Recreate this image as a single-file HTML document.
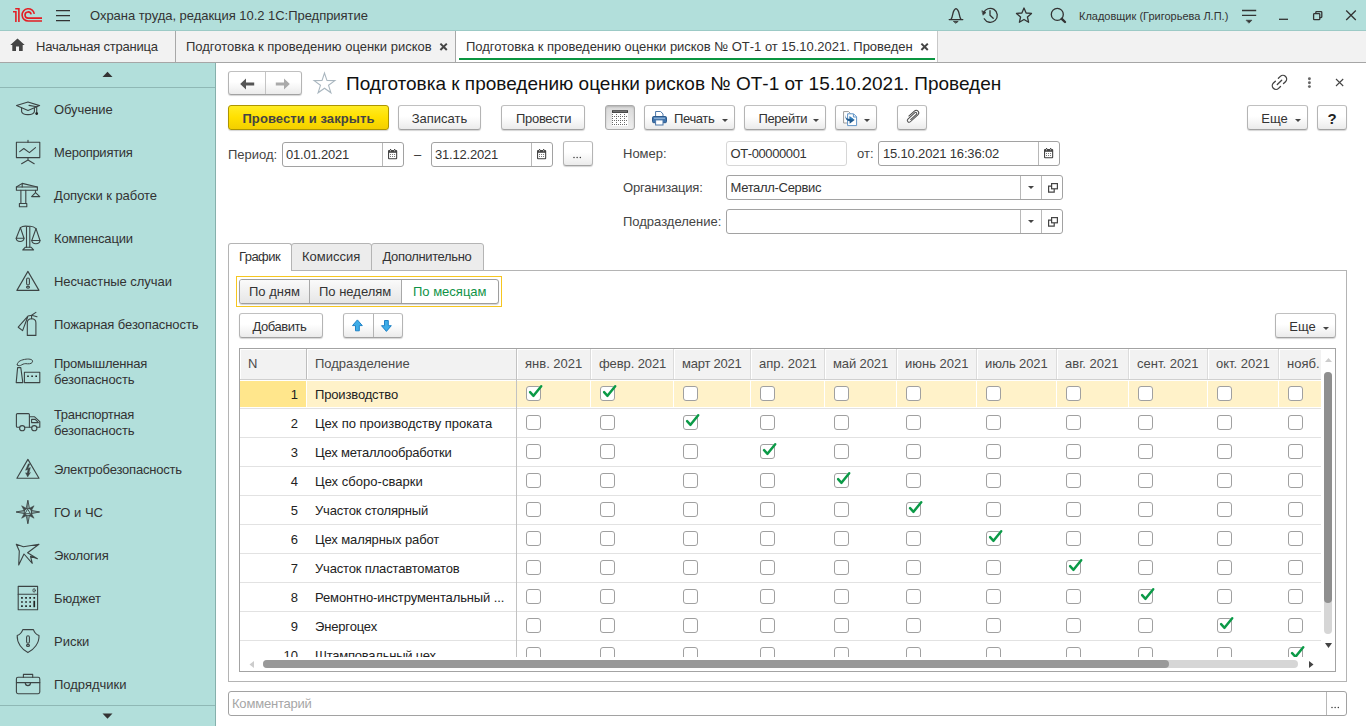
<!DOCTYPE html>
<html><head><meta charset="utf-8">
<style>
*{box-sizing:border-box;margin:0;padding:0}
html,body{width:1366px;height:726px;overflow:hidden;background:#fff;font-family:"Liberation Sans",sans-serif;font-size:13px;color:#333}
div,span,svg{position:absolute}
.t{white-space:nowrap;line-height:16px;height:16px}
#top{left:0;top:0;width:1366px;height:31px;background:#b2dfdb;border-bottom:1px solid #9ccac6}
#tabs{left:0;top:31px;width:1366px;height:32px;background:#f2f2f2;border-bottom:1px solid #a6a6a6}
#side{left:0;top:63px;width:216px;height:663px;background:#b2dfdb;border-right:1px solid #86b0ac}
.btn{border:1px solid #b5b5b5;border-color:#c0c0c0 #b4b4b4 #a2a2a2 #b4b4b4;border-radius:3px;background:linear-gradient(#ffffff 0%,#ffffff 45%,#ebebeb 100%);box-shadow:0 1px 1px rgba(0,0,0,.17);height:25px;color:#333}
.btn .t{top:5px}
.inp{border:1px solid #a2a2a2;border-radius:3px;background:#fff;height:25px}
.inp .t{top:4px;left:3px;letter-spacing:-0.2px}
.vd{width:1px;top:0;bottom:0;background:#b8b8b8}
.si{left:0;width:215px}
.si .t{left:54px;color:#333}
.cb{width:15px;height:15px;border:1px solid #a0a0a0;border-radius:3px;background:#fff}
.hc{top:1px;height:29px;background:#f2f2f2}
.hc .t{left:7px;top:6px;color:#4a4a4a}
.row{left:0;height:29px;width:1082px}
.row .ln{left:0;top:0;height:1px;width:1082px;background:#e2e2e2}
.row .t{top:8px;color:#222}
</style></head><body>

<div id="top">
<svg style="left:0;top:0" width="50" height="30" viewBox="0 0 50 30" fill="none" stroke="#e31e24" stroke-width="1.6"><path d="M13 11.8H15.9V21.9"/><path d="M15.2 8.8H18.9V21.9"/><path d="M34.3 13.8A6.15 6.15 0 1 0 28.25 21H42"/><path d="M31.15 14.4A3.1 3.1 0 1 0 28.1 18.1H42"/></svg>
<svg style="left:56px;top:9px" width="15" height="13" viewBox="0 0 15 13"><path d="M0 1.5H14M0 6.5H14M0 11.5H14" stroke="#333" stroke-width="1.25" fill="none"/></svg>
<span class="t" style="left:90px;top:8px;color:#333;letter-spacing:-0.035px">Охрана труда, редакция 10.2 1С:Предприятие</span>
<svg style="left:940px;top:0" width="426" height="30" viewBox="940 0 426 30" fill="none" stroke="#333" stroke-width="1.3" stroke-linecap="round" stroke-linejoin="round"><path d="M949.2 19.6H962.8M951 19.4C953.5 16 952 10 956 8.6C960 10 958.5 16 961 19.4"/><path d="M953.8 21.4H958.2L956 23Z" fill="#333" stroke-width="0.8"/><path d="M984.2 18.8A7 7 0 1 0 983.6 13.2"/><path d="M982.2 10.8L986 12.6L983.2 15Z" fill="#333" stroke-width="0.6"/><path d="M990 10.6V15.2L993.2 18.2"/><path d="M1024.00 8.00L1026.12 12.99L1031.51 13.46L1027.42 17.01L1028.64 22.29L1024.00 19.50L1019.36 22.29L1020.58 17.01L1016.49 13.46L1021.88 12.99Z" /><circle cx="1057.3" cy="14.4" r="6"/><path d="M1061.8 18.8L1065 22" stroke-width="2.4"/><path d="M1242 10.5H1256.2M1242 15.3H1256.2" stroke-linecap="butt"/><path d="M1246.4 20.2H1251.9L1249.15 23Z" fill="#333" stroke-width="0.6"/><path d="M1279 19.3H1288" stroke-linecap="butt"/><rect x="1313.6" y="13.7" width="6.2" height="6" rx="0.8"/><path d="M1315.8 13.4V12.4A0.8 0.8 0 0 1 1316.6 11.6H1321A0.8 0.8 0 0 1 1321.8 12.4V16.8A0.8 0.8 0 0 1 1321 17.6H1320"/><path d="M1346.2 10.5L1355.8 20M1355.8 10.5L1346.2 20" stroke-linecap="butt"/></svg>
<span class="t" style="left:1079px;top:8px;font-size:11px;color:#333">Кладовщик (Григорьева Л.П.)</span>
</div>
<div id="tabs">
<svg style="left:10px;top:7px" width="15" height="14" viewBox="0 0 15 14"><path d="M7.5 0.5L0.3 7H2.3V13H6V8.6H9V13H12.7V7H14.7Z" fill="#444"/></svg>
<span class="t" style="left:36px;top:8px;letter-spacing:-0.22px">Начальная страница</span>
<div style="left:175px;top:0;width:1px;height:31px;background:#a8a8a8"></div>
<span class="t" style="left:186px;top:8px">Подготовка к проведению оценки рисков</span>
<svg style="left:439.2px;top:11px" width="10" height="10" viewBox="0 0 10 10"><path d="M1.4 1.6L7.8 8M7.8 1.6L1.4 8" stroke="#444" stroke-width="2"/></svg>
<div style="left:455px;top:0;width:1px;height:31px;background:#a8a8a8"></div>
<div style="left:456px;top:0;width:481px;height:31px;background:#fff"></div>
<div style="left:937px;top:0;width:1px;height:31px;background:#c8c8c8"></div>
<div style="left:459px;top:27px;width:476px;height:2px;background:#0a9540"></div>
<span class="t" style="left:466px;top:8px;letter-spacing:-0.025px">Подготовка к проведению оценки рисков № ОТ-1 от 15.10.2021. Проведен</span>
<svg style="left:920px;top:11px" width="10" height="10" viewBox="0 0 10 10"><path d="M1.4 1.6L7.8 8M7.8 1.6L1.4 8" stroke="#444" stroke-width="2"/></svg>
</div>
<div id="side">
<svg style="left:102px;top:8px" width="11" height="7" viewBox="0 0 11 7"><path d="M0.5 6L5.5 0.8L10.5 6Z" fill="#333"/></svg>
<div style="left:0;top:24px;width:215px;height:1px;background:#8fb8b5"></div>
<div class="si" style="top:25px;height:43px">
<span class="t" style="top:14px;letter-spacing:-0.1px">Обучение</span>
</div>
<div class="si" style="top:68px;height:43px">
<span class="t" style="top:14px;letter-spacing:-0.26px">Мероприятия</span>
</div>
<div class="si" style="top:111px;height:43px">
<span class="t" style="top:14px;letter-spacing:-0.05px">Допуски к работе</span>
</div>
<div class="si" style="top:154px;height:43px">
<span class="t" style="top:14px;letter-spacing:-0.19px">Компенсации</span>
</div>
<div class="si" style="top:197px;height:43px">
<span class="t" style="top:14px;letter-spacing:-0.04px">Несчастные случаи</span>
</div>
<div class="si" style="top:240px;height:43px">
<span class="t" style="top:14px;letter-spacing:-0.09px">Пожарная безопасность</span>
</div>
<div class="si" style="top:283px;height:51px">
<span class="t" style="top:10px;letter-spacing:-0.25px">Промышленная</span>
<span class="t" style="top:26px;letter-spacing:-0.1px">безопасность</span>
</div>
<div class="si" style="top:334px;height:51px">
<span class="t" style="top:10px;letter-spacing:-0.34px">Транспортная</span>
<span class="t" style="top:26px;letter-spacing:-0.1px">безопасность</span>
</div>
<div class="si" style="top:385px;height:43px">
<span class="t" style="top:14px;letter-spacing:-0.2px">Электробезопасность</span>
</div>
<div class="si" style="top:428px;height:43px">
<span class="t" style="top:14px;letter-spacing:0px">ГО и ЧС</span>
</div>
<div class="si" style="top:471px;height:43px">
<span class="t" style="top:14px;letter-spacing:-0.2px">Экология</span>
</div>
<div class="si" style="top:514px;height:43px">
<span class="t" style="top:14px;letter-spacing:0px">Бюджет</span>
</div>
<div class="si" style="top:557px;height:43px">
<span class="t" style="top:14px;letter-spacing:0px">Риски</span>
</div>
<div class="si" style="top:600px;height:43px">
<span class="t" style="top:14px;letter-spacing:0px">Подрядчики</span>
</div>
<svg style="left:0;top:0" width="215" height="663" viewBox="0 63 215 663" fill="none" stroke="#3c4444" stroke-width="1.1" stroke-linejoin="round" stroke-linecap="round"><path d="M16.5 105.6L28 102L39.6 105.6L28 110.4Z"/><path d="M21.6 108V111.6C22.5 115.6 33.5 115.6 34.4 111.6V108"/><path d="M29 105.4L36.7 106.8V112.5"/><circle cx="36.7" cy="113.6" r="0.9" fill="#222" stroke="#222"/><rect x="16.4" y="142.3" width="23.4" height="15.3"/><path d="M28 140.4V142.3M28 157.6V160L21.6 163.7M28 160L34.2 163.7"/><path d="M19.7 151.6L23.8 148.5L29.4 152.6L35.5 147.6"/><rect x="16.4" y="187" width="21" height="3.2"/><path d="M16.4 187L22.2 183.4L37.4 187M22.2 183.4V187"/><path d="M20.9 190.2V203.5M25.8 190.2V203.5"/><rect x="19.4" y="203.5" width="7.4" height="3.3"/><path d="M35.5 190.2V192.6L31.6 196.6H39.8L35.5 192.6"/><path d="M26.5 227V247.2M29.8 227V247.2"/><path d="M25.4 247.2H31L33.6 249.9H22.8Z"/><path d="M20.4 227.6C23 225.6 26 226 28.2 226.4C31 226 34 226.6 36 228.6"/><path d="M16.2 238.3L20.4 227.6L24 238.3Z"/><path d="M16.2 238.3C16.6 242.6 23.6 242.6 24 238.3"/><path d="M31.8 240.5L36 228.6L40 240.5Z"/><path d="M31.8 240.5C32.2 244.8 39.6 244.8 40 240.5"/><path d="M27.9 271.4L39 290.4H16.9Z"/><rect x="26.6" y="278" width="2.8" height="7" rx="1.4"/><ellipse cx="28" cy="287.2" rx="1.5" ry="0.9"/><path d="M27.3 335.4V322.8C27.3 317.4 35.9 317.4 35.9 322.8V335.4Z"/><path d="M31.6 318.7V315.2M31.6 315.2L35.9 312.4M31.6 315.2L37 316.8"/><path d="M31.6 315.6C29.6 315.2 27.6 315.8 26.6 317.6L18.2 327.2L22.6 330.6L27.6 317.2"/><path d="M17.6 367.6H20.8L22.8 382.6H16.2Z"/><rect x="24.4" y="372.3" width="15.4" height="10.3"/><path d="M27.2 376.2H28.8M31.3 376.2H32.9M35.4 376.2H37" stroke="#222" stroke-width="1.6" stroke-linecap="butt"/><path d="M17.4 365C16.6 362.4 20 360.2 24.6 359.4C28.6 358.6 32.6 359.2 32.6 361.2C32.6 363.2 30.2 364 27.6 363.8C25.2 363.4 23.4 363.8 21.8 364.8C20.2 365.8 18 366.4 17.4 365Z" stroke-width="1"/><path d="M19.6 427.2H17.4A1 1 0 0 1 16.4 426.2V414.6A1 1 0 0 1 17.4 413.6H28.4A1 1 0 0 1 29.4 414.6V427.2H24.8"/><path d="M29.4 416.8H34.6L39.8 421.6V427.2H37"/><path d="M31.6 427.2H29.4"/><path d="M31.6 419.4H35.2L38.4 422.6H31.6Z"/><circle cx="22.2" cy="428.2" r="2.6"/><circle cx="34.3" cy="428.2" r="2.6"/><path d="M27.9 459.4L39 478.3H16.9Z"/><path d="M28.2 464L25.5 470.3L28.1 469.5L27 473.2L25.5 472.8L27.7 477L30.5 472.4L28.9 473.2L30.4 467.5L27.9 468.5L29.8 464Z" fill="#3c4444" stroke-width="0.4"/><g transform="rotate(0 27.85 512.00)"><path d="M26.15 508.60L27.85 500.30L29.55 508.60" stroke-width="0.85"/><path d="M27.85 500.80V508.20" stroke-width="0.8"/></g><g transform="rotate(45 27.85 512.00)"><path d="M26.35 508.20L27.85 503.20L29.35 508.20Z" fill="#3c4444" stroke-width="0.5"/></g><g transform="rotate(90 27.85 512.00)"><path d="M26.15 508.60L27.85 500.30L29.55 508.60" stroke-width="0.85"/><path d="M27.85 500.80V508.20" stroke-width="0.8"/></g><g transform="rotate(135 27.85 512.00)"><path d="M26.35 508.20L27.85 503.20L29.35 508.20Z" fill="#3c4444" stroke-width="0.5"/></g><g transform="rotate(180 27.85 512.00)"><path d="M26.15 508.60L27.85 500.30L29.55 508.60" stroke-width="0.85"/><path d="M27.85 500.80V508.20" stroke-width="0.8"/></g><g transform="rotate(225 27.85 512.00)"><path d="M26.35 508.20L27.85 503.20L29.35 508.20Z" fill="#3c4444" stroke-width="0.5"/></g><g transform="rotate(270 27.85 512.00)"><path d="M26.15 508.60L27.85 500.30L29.55 508.60" stroke-width="0.85"/><path d="M27.85 500.80V508.20" stroke-width="0.8"/></g><g transform="rotate(315 27.85 512.00)"><path d="M26.35 508.20L27.85 503.20L29.35 508.20Z" fill="#3c4444" stroke-width="0.5"/></g><circle cx="27.85" cy="512.00" r="3.7" stroke-width="0.9"/><path d="M27.85 509.40L30.35 513.70H25.35Z" stroke-width="0.9"/><path d="M16.3 544.3L23.4 546.8L39 544.3L27.6 552.8L37.4 558.7L30.5 556.3L32.3 563.3L24 554L18.7 565L19.3 551Z"/><rect x="18.2" y="586.4" width="19.4" height="23.3"/><path d="M18.2 594.3H37.6"/><ellipse cx="34.1" cy="590.4" rx="1.2" ry="1.7" stroke-width="0.9"/><path d="M21.1 597.8h1.7M25.2 597.8h1.7M29.3 597.8h1.7M21.1 602.0h1.7M25.2 602.0h1.7M29.3 602.0h1.7M21.1 606.2h1.7M25.2 606.2h1.7M29.3 606.2h1.7M33.4 597.8h1.7" stroke="#222" stroke-width="1.7" stroke-linecap="butt"/><path d="M34.25 600.8V607.2" stroke="#222" stroke-width="1.7" stroke-linecap="butt"/><path d="M22.8 629.6H33.4C34.4 632.6 36.6 634.6 39 635.6C39.4 643 34 649.6 27.9 652.6C22 649.6 16.8 643 17.2 635.6C19.6 634.6 21.8 632.6 22.8 629.6Z"/><rect x="26.6" y="635.8" width="2.8" height="7.4" rx="1.4"/><ellipse cx="28" cy="645.4" rx="1.5" ry="1"/><rect x="16.4" y="677.3" width="23.4" height="16.4" rx="1.6"/><path d="M23.4 677.3V674.4H32.7V677.3"/><path d="M16.4 682.6H39.8"/><path d="M25.2 682.6C25.4 686.6 30.4 686.6 30.6 682.6"/></svg>
<div style="left:0;top:642px;width:215px;height:1px;background:#8fb8b5"></div>
<svg style="left:102px;top:650px" width="11" height="7" viewBox="0 0 11 7"><path d="M0.5 0.5L5.5 5.8L10.5 0.5Z" fill="#333"/></svg>
</div>
<div id="main" style="left:0;top:0;width:1366px;height:726px">
<div class="btn" style="left:228px;top:71px;width:74px;height:24px"><div class="vd" style="left:36px;background:#c4c4c4"></div><svg style="left:10.6px;top:5.5px" width="15" height="12" viewBox="0 0 15 12"><path d="M0.2 6L6 0.6V4.4H14.2V7.6H6V11.4Z" fill="#555"/></svg><svg style="left:46.2px;top:5.5px" width="15" height="12" viewBox="0 0 15 12"><path d="M14.8 6L9 0.6V4.4H0.8V7.6H9V11.4Z" fill="#aaa"/></svg></div>
<svg style="left:310px;top:70px" width="30" height="26" viewBox="310 70 30 26" fill="none" stroke="#a9b6bf" stroke-width="1.1" stroke-linejoin="miter"><path d="M324.50 73.10L327.00 80.56L334.87 80.63L328.54 85.31L330.91 92.82L324.50 88.25L318.09 92.82L320.46 85.31L314.13 80.63L322.00 80.56Z" /></svg>
<span class="t" style="left:346px;top:73px;font-size:19px;line-height:22px;height:22px;color:#111">Подготовка к проведению оценки рисков № ОТ-1 от 15.10.2021. Проведен</span>
<svg style="left:1268px;top:70px" width="24" height="24" viewBox="1268 70 24 24" fill="none" stroke="#444" stroke-width="1.35" stroke-linecap="round"><g transform="translate(1276 85.7) rotate(-44)"><path d="M2.7 -3.7H0A3.7 3.7 0 0 0 0 3.7H2.7M6.9 -3.7H9.6A3.7 3.7 0 0 1 9.6 3.7H6.9M1.8 0H7.9"/></g></svg>
<svg style="left:1306px;top:76px" width="7" height="14" viewBox="0 0 7 14"><circle cx="3.4" cy="2.7" r="1.45" fill="#666"/><circle cx="3.4" cy="6.7" r="1.45" fill="#666"/><circle cx="3.4" cy="10.6" r="1.45" fill="#666"/></svg>
<svg style="left:1334px;top:77px" width="11" height="11" viewBox="0 0 11 11"><path d="M2 2L9.2 9M9.2 2L2 9" stroke="#444" stroke-width="1.1"/></svg>
<div class="btn" style="left:228px;top:105px;width:161px;background:linear-gradient(#ffec25 0%,#ffe000 50%,#f3cf00 100%);border-color:#ad9500"><span class="t" style="left:0;width:159px;text-align:center;font-weight:bold;color:#444;letter-spacing:0.1px">Провести и закрыть</span></div>
<div class="btn" style="left:398px;top:105px;width:83px"><span class="t" style="left:0;width:81px;text-align:center">Записать</span></div>
<div class="btn" style="left:501px;top:105px;width:84px"><span class="t" style="left:14px;letter-spacing:-0.3px">Провести</span></div>
<div class="btn" style="left:605px;top:105px;width:30px;background:linear-gradient(#d9d9d9,#efefef);border-color:#aaa;box-shadow:inset 0 1px 2px rgba(0,0,0,.18)"><svg style="left:6px;top:4px" width="16" height="16" viewBox="0 0 16 16"><rect x="0" y="3" width="16" height="13" fill="#fff"/><rect x="0" y="0.2" width="16" height="2.7" fill="#3a3a3a"/><path d="M1 1.55H15" stroke="#999" stroke-width="0.6"/><path d="M0 4.5H16" stroke="#6a6a6a" stroke-width="1" stroke-dasharray="1 3"/><path d="M0 6.5H16" stroke="#6a6a6a" stroke-width="1" stroke-dasharray="1 1"/><path d="M0 8.5H16" stroke="#6a6a6a" stroke-width="1" stroke-dasharray="1 3"/><path d="M0 10.5H16" stroke="#6a6a6a" stroke-width="1" stroke-dasharray="1 1"/><path d="M0 12.5H16" stroke="#6a6a6a" stroke-width="1" stroke-dasharray="1 3"/><path d="M0 14.5H16" stroke="#6a6a6a" stroke-width="1" stroke-dasharray="1 1"/></svg></div>
<div class="btn" style="left:644px;top:105px;width:91px"><svg style="left:7px;top:5px" width="15" height="15" viewBox="0 0 15 15"><path d="M3.6 0.5H8.6L11 2.9V6H3.6Z" fill="#fff" stroke="#4a76a8" stroke-width="1"/><rect x="0.5" y="5.5" width="14" height="6.2" rx="1.2" fill="#3f74ad" stroke="#2d5a8c"/><path d="M2 7.2H13" stroke="#a9c6e4" stroke-width="1"/><rect x="3.6" y="8.9" width="7.4" height="5.1" fill="#fff" stroke="#4a76a8"/></svg><span class="t" style="left:29px;letter-spacing:-0.38px">Печать</span><svg style="left:77px;top:12.5px" width="6" height="3" viewBox="0 0 6 3"><path d="M0 0H6L3 3Z" fill="#444"/></svg></div>
<div class="btn" style="left:744px;top:105px;width:82px"><span class="t" style="left:13.5px;letter-spacing:-0.4px">Перейти</span><svg style="left:68px;top:12.5px" width="6" height="3" viewBox="0 0 6 3"><path d="M0 0H6L3 3Z" fill="#444"/></svg></div>
<div class="btn" style="left:835px;top:105px;width:42px"><svg style="left:7px;top:5px" width="16" height="16" viewBox="0 0 16 16"><path d="M0.6 0.6H5.6L7.6 2.6V12H0.6Z" fill="#fff" stroke="#9a9a9a"/><path d="M4.6 2.8H10.6L13.6 5.8V14.6H4.6Z" fill="#fff" stroke="#5f93c6"/><path d="M10.4 3V6H13.4" fill="none" stroke="#5f93c6"/><path d="M2.2 3.6C2.4 7.4 4.6 8 6.6 8V5.2L11.6 9L6.6 12.8V10.2C3.8 10 2 8 2.2 3.6Z" fill="#215a8e"/><path d="M6.6 8V5.2L11.6 9Z" fill="#2f7fbf"/></svg><svg style="left:28px;top:12.5px" width="6" height="3" viewBox="0 0 6 3"><path d="M0 0H6L3 3Z" fill="#444"/></svg></div>
<div class="btn" style="left:897px;top:105px;width:30px"><svg style="left:0;top:0" width="28" height="23" viewBox="898 106 28 23" fill="none" stroke="#4a4a4a" stroke-width="1" stroke-linecap="round"><g transform="translate(906.6 121.8) rotate(-42.5)"><path d="M4.5 1.1H12.3A1.1 1.1 0 0 0 12.3 -1.1H2.8A1.8 1.8 0 0 0 2.8 2.5H13A2.6 2.6 0 0 0 13 -2.7H5.5"/></g></svg></div>
<div class="btn" style="left:1247px;top:105px;width:61px"><span class="t" style="left:13.3px">Еще</span><svg style="left:47px;top:12.5px" width="6" height="3" viewBox="0 0 6 3"><path d="M0 0H6L3 3Z" fill="#444"/></svg></div>
<div class="btn" style="left:1317px;top:105px;width:30px"><span class="t" style="left:0;width:28px;text-align:center;font-weight:bold;font-size:15px;color:#222">?</span></div>
<span class="t" style="left:228px;top:147px;color:#444">Период:</span>
<div class="inp" style="left:282px;top:142px;width:122px"><span class="t">01.01.2021</span><div class="vd" style="left:99px"></div><svg style="left:105px;top:6px" width="10" height="11" viewBox="0 0 10 11"><rect x="0" y="1" width="9.2" height="9.3" rx="1" fill="#454545"/><rect x="1.1" y="3.8" width="7" height="5.4" fill="#fff"/><path d="M2.55 0V1.4M6.65 0V1.4" stroke="#454545" stroke-width="1.2"/><circle cx="2.55" cy="1.7" r="0.55" fill="#fff"/><circle cx="6.65" cy="1.7" r="0.55" fill="#fff"/><circle cx="2.55" cy="5.6" r="0.5" fill="#454545"/><circle cx="2.55" cy="7.6" r="0.5" fill="#454545"/><circle cx="4.6" cy="5.6" r="0.5" fill="#454545"/><circle cx="4.6" cy="7.6" r="0.5" fill="#454545"/><circle cx="6.65" cy="5.6" r="0.5" fill="#454545"/><circle cx="6.65" cy="7.6" r="0.5" fill="#454545"/></svg></div>
<span class="t" style="left:414px;top:147px">–</span>
<div class="inp" style="left:431px;top:142px;width:122px"><span class="t">31.12.2021</span><div class="vd" style="left:99px"></div><svg style="left:105px;top:6px" width="10" height="11" viewBox="0 0 10 11"><rect x="0" y="1" width="9.2" height="9.3" rx="1" fill="#454545"/><rect x="1.1" y="3.8" width="7" height="5.4" fill="#fff"/><path d="M2.55 0V1.4M6.65 0V1.4" stroke="#454545" stroke-width="1.2"/><circle cx="2.55" cy="1.7" r="0.55" fill="#fff"/><circle cx="6.65" cy="1.7" r="0.55" fill="#fff"/><circle cx="2.55" cy="5.6" r="0.5" fill="#454545"/><circle cx="2.55" cy="7.6" r="0.5" fill="#454545"/><circle cx="4.6" cy="5.6" r="0.5" fill="#454545"/><circle cx="4.6" cy="7.6" r="0.5" fill="#454545"/><circle cx="6.65" cy="5.6" r="0.5" fill="#454545"/><circle cx="6.65" cy="7.6" r="0.5" fill="#454545"/></svg></div>
<div class="btn" style="left:563px;top:141px;width:30px"><svg style="left:9.3px;top:14px" width="9" height="3" viewBox="0 0 9 3"><circle cx="1" cy="1.4" r="0.75" fill="#3a3a3a"/><circle cx="4.15" cy="1.4" r="0.75" fill="#3a3a3a"/><circle cx="7.3" cy="1.4" r="0.75" fill="#3a3a3a"/></svg></div>
<span class="t" style="left:623px;top:146px;color:#444">Номер:</span>
<div class="inp" style="left:726px;top:141px;width:121px;border-color:#d6d6d6"><span class="t" style="letter-spacing:-0.4px;left:3.5px">ОТ-00000001</span></div>
<span class="t" style="left:857px;top:146px;color:#444">от:</span>
<div class="inp" style="left:878px;top:141px;width:182px"><span class="t" style="left:4px;letter-spacing:-0.17px">15.10.2021 16:36:02</span><div class="vd" style="left:159px"></div><svg style="left:165px;top:6px" width="10" height="11" viewBox="0 0 10 11"><rect x="0" y="1" width="9.2" height="9.3" rx="1" fill="#454545"/><rect x="1.1" y="3.8" width="7" height="5.4" fill="#fff"/><path d="M2.55 0V1.4M6.65 0V1.4" stroke="#454545" stroke-width="1.2"/><circle cx="2.55" cy="1.7" r="0.55" fill="#fff"/><circle cx="6.65" cy="1.7" r="0.55" fill="#fff"/><circle cx="2.55" cy="5.6" r="0.5" fill="#454545"/><circle cx="2.55" cy="7.6" r="0.5" fill="#454545"/><circle cx="4.6" cy="5.6" r="0.5" fill="#454545"/><circle cx="4.6" cy="7.6" r="0.5" fill="#454545"/><circle cx="6.65" cy="5.6" r="0.5" fill="#454545"/><circle cx="6.65" cy="7.6" r="0.5" fill="#454545"/></svg></div>
<span class="t" style="left:623px;top:180px;color:#444;letter-spacing:-0.2px">Организация:</span>
<div class="inp" style="left:726px;top:175px;width:337px"><span class="t" style="left:3.5px;letter-spacing:-0.32px">Металл-Сервис</span><div class="vd" style="left:293px"></div><div class="vd" style="left:314px"></div><svg style="left:301px;top:10px" width="6" height="3" viewBox="0 0 6 3"><path d="M0 0H6L3 3Z" fill="#444"/></svg><svg style="left:321px;top:7px" width="10" height="10" viewBox="0 0 10 10" fill="none" stroke="#444" stroke-width="1.2"><rect x="3.6" y="0.6" width="5.8" height="5.2"/><path d="M3.4 3.2H0.6V9.2H6.2V6"/></svg></div>
<span class="t" style="left:623px;top:214px;color:#444">Подразделение:</span>
<div class="inp" style="left:726px;top:209px;width:337px"><div class="vd" style="left:293px"></div><div class="vd" style="left:314px"></div><svg style="left:301px;top:10px" width="6" height="3" viewBox="0 0 6 3"><path d="M0 0H6L3 3Z" fill="#444"/></svg><svg style="left:321px;top:7px" width="10" height="10" viewBox="0 0 10 10" fill="none" stroke="#444" stroke-width="1.2"><rect x="3.6" y="0.6" width="5.8" height="5.2"/><path d="M3.4 3.2H0.6V9.2H6.2V6"/></svg></div>
<div style="left:228px;top:270px;width:1119px;height:412px;border:1px solid #b4b4b4;background:#fff"></div>
<div style="left:291px;top:243px;width:81px;height:28px;background:#ececec;border:1px solid #b4b4b4;border-radius:3px 3px 0 0"><span class="t" style="left:10px;top:5px">Комиссия</span></div>
<div style="left:371px;top:243px;width:113px;height:28px;background:#ececec;border:1px solid #b4b4b4;border-radius:3px 3px 0 0"><span class="t" style="left:10.5px;top:5px;letter-spacing:-0.36px">Дополнительно</span></div>
<div style="left:228px;top:243px;width:64px;height:28px;background:#fff;border:1px solid #b4b4b4;border-bottom:none;border-radius:3px 3px 0 0"><span class="t" style="left:10px;top:5px;letter-spacing:-0.55px">График</span></div>
<div style="left:236px;top:276px;width:266px;height:31px;border:1px solid #f6c620"></div>
<div class="btn" style="left:239px;top:279px;width:260px;background:#fff;border-color:#9e9e9e"><div style="left:0;top:0;width:161px;height:23px;background:linear-gradient(#fafafa,#e6e6e6);border-radius:2px 0 0 2px"></div><div class="vd" style="left:69px;background:#a8a8a8"></div><div class="vd" style="left:161px;background:#a8a8a8"></div><span class="t" style="left:9px;top:4px">По дням</span><span class="t" style="left:79px;top:4px">По неделям</span><span class="t" style="left:173px;top:4px;color:#0f9347">По месяцам</span></div>
<div class="btn" style="left:239px;top:313px;width:84px"><span class="t" style="left:12.5px;letter-spacing:-0.46px">Добавить</span></div>
<div class="btn" style="left:343px;top:313px;width:60px"><div class="vd" style="left:29px;background:#b4b4b4"></div><svg style="left:7px;top:5px" width="14" height="14" viewBox="0 0 14 14"><path d="M6.4 0.9L11.3 6.6H8.3V11.8H4.5V6.6H1.5Z" fill="#3dade8" stroke="#1f82c6" stroke-width="1" stroke-linejoin="round"/></svg><svg style="left:36px;top:5px" width="14" height="14" viewBox="0 0 14 14"><path d="M6.4 12.4L11.3 6.7H8.3V1.5H4.5V6.7H1.5Z" fill="#3dade8" stroke="#1f82c6" stroke-width="1" stroke-linejoin="round"/></svg></div>
<div class="btn" style="left:1275px;top:313px;width:61px"><span class="t" style="left:13.3px">Еще</span><svg style="left:47px;top:12.5px" width="6" height="3" viewBox="0 0 6 3"><path d="M0 0H6L3 3Z" fill="#444"/></svg></div>
<div style="left:239px;top:348px;width:1097px;height:324px;border:1px solid #a3a3a3;background:#fff;overflow:hidden">
<div style="left:0;top:0;width:1081px;height:308px;overflow:hidden">
<div class="hc" style="left:1px;width:65px"><span class="t" style="left:7px;letter-spacing:0px">N</span></div>
<div class="hc" style="left:68px;width:208px"><span class="t" style="left:7px;letter-spacing:0px">Подразделение</span></div>
<div style="left:66px;top:0;width:1px;height:31px;background:#bdbdbd"></div>
<div class="hc" style="left:278px;width:72px"><span class="t" style="left:7px;letter-spacing:0px">янв. 2021</span></div>
<div style="left:276px;top:0;width:1px;height:31px;background:#bdbdbd"></div>
<div class="hc" style="left:352px;width:81px"><span class="t" style="left:7px;letter-spacing:-0.1px">февр. 2021</span></div>
<div style="left:350px;top:0;width:1px;height:31px;background:#dcdcdc"></div>
<div class="hc" style="left:435px;width:75px"><span class="t" style="left:7px;letter-spacing:-0.22px">март 2021</span></div>
<div style="left:433px;top:0;width:1px;height:31px;background:#dcdcdc"></div>
<div class="hc" style="left:512px;width:72px"><span class="t" style="left:7px;letter-spacing:0px">апр. 2021</span></div>
<div style="left:510px;top:0;width:1px;height:31px;background:#dcdcdc"></div>
<div class="hc" style="left:586px;width:70px"><span class="t" style="left:7px;letter-spacing:-0.12px">май 2021</span></div>
<div style="left:584px;top:0;width:1px;height:31px;background:#dcdcdc"></div>
<div class="hc" style="left:658px;width:78px"><span class="t" style="left:7px;letter-spacing:0px">июнь 2021</span></div>
<div style="left:656px;top:0;width:1px;height:31px;background:#dcdcdc"></div>
<div class="hc" style="left:738px;width:78px"><span class="t" style="left:7px;letter-spacing:-0.12px">июль 2021</span></div>
<div style="left:736px;top:0;width:1px;height:31px;background:#dcdcdc"></div>
<div class="hc" style="left:818px;width:70px"><span class="t" style="left:7px;letter-spacing:0px">авг. 2021</span></div>
<div style="left:816px;top:0;width:1px;height:31px;background:#dcdcdc"></div>
<div class="hc" style="left:890px;width:77px"><span class="t" style="left:7px;letter-spacing:0px">сент. 2021</span></div>
<div style="left:888px;top:0;width:1px;height:31px;background:#dcdcdc"></div>
<div class="hc" style="left:969px;width:69px"><span class="t" style="left:7px;letter-spacing:0px">окт. 2021</span></div>
<div style="left:967px;top:0;width:1px;height:31px;background:#dcdcdc"></div>
<div class="hc" style="left:1040px;width:42px"><span class="t" style="left:7px;letter-spacing:0px">нояб.</span></div>
<div style="left:1038px;top:0;width:1px;height:31px;background:#dcdcdc"></div>
<div style="left:0;top:30px;width:1082px;height:1px;background:#cfcfcf"></div>
<div class="row" style="top:30px">
<div style="left:0;top:2px;width:66px;height:26px;background:#ffe68c"></div>
<div style="left:67px;top:2px;width:209px;height:26px;background:#fff2c9"></div>
<div style="left:277px;top:2px;width:73px;height:26px;background:#fff2c9"></div>
<div style="left:351px;top:2px;width:82px;height:26px;background:#fff2c9"></div>
<div style="left:434px;top:2px;width:76px;height:26px;background:#fff2c9"></div>
<div style="left:511px;top:2px;width:73px;height:26px;background:#fff2c9"></div>
<div style="left:585px;top:2px;width:71px;height:26px;background:#fff2c9"></div>
<div style="left:657px;top:2px;width:79px;height:26px;background:#fff2c9"></div>
<div style="left:737px;top:2px;width:79px;height:26px;background:#fff2c9"></div>
<div style="left:817px;top:2px;width:71px;height:26px;background:#fff2c9"></div>
<div style="left:889px;top:2px;width:78px;height:26px;background:#fff2c9"></div>
<div style="left:968px;top:2px;width:70px;height:26px;background:#fff2c9"></div>
<div style="left:1039px;top:2px;width:43px;height:26px;background:#fff2c9"></div>
<span class="t" style="left:0;width:58px;text-align:right">1</span>
<span class="t" style="left:75px;letter-spacing:-0.15px">Производство</span>
<div class="cb" style="left:286px;top:7px"></div><svg style="left:286px;top:5px" width="18" height="18" viewBox="0 0 18 18"><path d="M4.1 8.2L7.5 11.8L15.2 2.2" fill="none" stroke="#0b9a47" stroke-width="2.5" stroke-linecap="round" stroke-linejoin="round"/></svg>
<div class="cb" style="left:360px;top:7px"></div><svg style="left:360px;top:5px" width="18" height="18" viewBox="0 0 18 18"><path d="M4.1 8.2L7.5 11.8L15.2 2.2" fill="none" stroke="#0b9a47" stroke-width="2.5" stroke-linecap="round" stroke-linejoin="round"/></svg>
<div class="cb" style="left:443px;top:7px"></div>
<div class="cb" style="left:520px;top:7px"></div>
<div class="cb" style="left:594px;top:7px"></div>
<div class="cb" style="left:666px;top:7px"></div>
<div class="cb" style="left:746px;top:7px"></div>
<div class="cb" style="left:826px;top:7px"></div>
<div class="cb" style="left:898px;top:7px"></div>
<div class="cb" style="left:977px;top:7px"></div>
<div class="cb" style="left:1048px;top:7px"></div>
</div>
<div class="row" style="top:59px">
<div class="ln"></div>
<span class="t" style="left:0;width:58px;text-align:right">2</span>
<span class="t" style="left:75px;letter-spacing:0px">Цех по производству проката</span>
<div class="cb" style="left:286px;top:7px"></div>
<div class="cb" style="left:360px;top:7px"></div>
<div class="cb" style="left:443px;top:7px"></div><svg style="left:443px;top:5px" width="18" height="18" viewBox="0 0 18 18"><path d="M4.1 8.2L7.5 11.8L15.2 2.2" fill="none" stroke="#0b9a47" stroke-width="2.5" stroke-linecap="round" stroke-linejoin="round"/></svg>
<div class="cb" style="left:520px;top:7px"></div>
<div class="cb" style="left:594px;top:7px"></div>
<div class="cb" style="left:666px;top:7px"></div>
<div class="cb" style="left:746px;top:7px"></div>
<div class="cb" style="left:826px;top:7px"></div>
<div class="cb" style="left:898px;top:7px"></div>
<div class="cb" style="left:977px;top:7px"></div>
<div class="cb" style="left:1048px;top:7px"></div>
</div>
<div class="row" style="top:88px">
<div class="ln"></div>
<span class="t" style="left:0;width:58px;text-align:right">3</span>
<span class="t" style="left:75px;letter-spacing:-0.19px">Цех металлообработки</span>
<div class="cb" style="left:286px;top:7px"></div>
<div class="cb" style="left:360px;top:7px"></div>
<div class="cb" style="left:443px;top:7px"></div>
<div class="cb" style="left:520px;top:7px"></div><svg style="left:520px;top:5px" width="18" height="18" viewBox="0 0 18 18"><path d="M4.1 8.2L7.5 11.8L15.2 2.2" fill="none" stroke="#0b9a47" stroke-width="2.5" stroke-linecap="round" stroke-linejoin="round"/></svg>
<div class="cb" style="left:594px;top:7px"></div>
<div class="cb" style="left:666px;top:7px"></div>
<div class="cb" style="left:746px;top:7px"></div>
<div class="cb" style="left:826px;top:7px"></div>
<div class="cb" style="left:898px;top:7px"></div>
<div class="cb" style="left:977px;top:7px"></div>
<div class="cb" style="left:1048px;top:7px"></div>
</div>
<div class="row" style="top:117px">
<div class="ln"></div>
<span class="t" style="left:0;width:58px;text-align:right">4</span>
<span class="t" style="left:75px;letter-spacing:0.03px">Цех сборо-сварки</span>
<div class="cb" style="left:286px;top:7px"></div>
<div class="cb" style="left:360px;top:7px"></div>
<div class="cb" style="left:443px;top:7px"></div>
<div class="cb" style="left:520px;top:7px"></div>
<div class="cb" style="left:594px;top:7px"></div><svg style="left:594px;top:5px" width="18" height="18" viewBox="0 0 18 18"><path d="M4.1 8.2L7.5 11.8L15.2 2.2" fill="none" stroke="#0b9a47" stroke-width="2.5" stroke-linecap="round" stroke-linejoin="round"/></svg>
<div class="cb" style="left:666px;top:7px"></div>
<div class="cb" style="left:746px;top:7px"></div>
<div class="cb" style="left:826px;top:7px"></div>
<div class="cb" style="left:898px;top:7px"></div>
<div class="cb" style="left:977px;top:7px"></div>
<div class="cb" style="left:1048px;top:7px"></div>
</div>
<div class="row" style="top:146px">
<div class="ln"></div>
<span class="t" style="left:0;width:58px;text-align:right">5</span>
<span class="t" style="left:75px;letter-spacing:-0.17px">Участок столярный</span>
<div class="cb" style="left:286px;top:7px"></div>
<div class="cb" style="left:360px;top:7px"></div>
<div class="cb" style="left:443px;top:7px"></div>
<div class="cb" style="left:520px;top:7px"></div>
<div class="cb" style="left:594px;top:7px"></div>
<div class="cb" style="left:666px;top:7px"></div><svg style="left:666px;top:5px" width="18" height="18" viewBox="0 0 18 18"><path d="M4.1 8.2L7.5 11.8L15.2 2.2" fill="none" stroke="#0b9a47" stroke-width="2.5" stroke-linecap="round" stroke-linejoin="round"/></svg>
<div class="cb" style="left:746px;top:7px"></div>
<div class="cb" style="left:826px;top:7px"></div>
<div class="cb" style="left:898px;top:7px"></div>
<div class="cb" style="left:977px;top:7px"></div>
<div class="cb" style="left:1048px;top:7px"></div>
</div>
<div class="row" style="top:175px">
<div class="ln"></div>
<span class="t" style="left:0;width:58px;text-align:right">6</span>
<span class="t" style="left:75px;letter-spacing:-0.11px">Цех малярных работ</span>
<div class="cb" style="left:286px;top:7px"></div>
<div class="cb" style="left:360px;top:7px"></div>
<div class="cb" style="left:443px;top:7px"></div>
<div class="cb" style="left:520px;top:7px"></div>
<div class="cb" style="left:594px;top:7px"></div>
<div class="cb" style="left:666px;top:7px"></div>
<div class="cb" style="left:746px;top:7px"></div><svg style="left:746px;top:5px" width="18" height="18" viewBox="0 0 18 18"><path d="M4.1 8.2L7.5 11.8L15.2 2.2" fill="none" stroke="#0b9a47" stroke-width="2.5" stroke-linecap="round" stroke-linejoin="round"/></svg>
<div class="cb" style="left:826px;top:7px"></div>
<div class="cb" style="left:898px;top:7px"></div>
<div class="cb" style="left:977px;top:7px"></div>
<div class="cb" style="left:1048px;top:7px"></div>
</div>
<div class="row" style="top:204px">
<div class="ln"></div>
<span class="t" style="left:0;width:58px;text-align:right">7</span>
<span class="t" style="left:75px;letter-spacing:-0.16px">Участок пластавтоматов</span>
<div class="cb" style="left:286px;top:7px"></div>
<div class="cb" style="left:360px;top:7px"></div>
<div class="cb" style="left:443px;top:7px"></div>
<div class="cb" style="left:520px;top:7px"></div>
<div class="cb" style="left:594px;top:7px"></div>
<div class="cb" style="left:666px;top:7px"></div>
<div class="cb" style="left:746px;top:7px"></div>
<div class="cb" style="left:826px;top:7px"></div><svg style="left:826px;top:5px" width="18" height="18" viewBox="0 0 18 18"><path d="M4.1 8.2L7.5 11.8L15.2 2.2" fill="none" stroke="#0b9a47" stroke-width="2.5" stroke-linecap="round" stroke-linejoin="round"/></svg>
<div class="cb" style="left:898px;top:7px"></div>
<div class="cb" style="left:977px;top:7px"></div>
<div class="cb" style="left:1048px;top:7px"></div>
</div>
<div class="row" style="top:233px">
<div class="ln"></div>
<span class="t" style="left:0;width:58px;text-align:right">8</span>
<span class="t" style="left:75px;letter-spacing:-0.12px">Ремонтно-инструментальный ...</span>
<div class="cb" style="left:286px;top:7px"></div>
<div class="cb" style="left:360px;top:7px"></div>
<div class="cb" style="left:443px;top:7px"></div>
<div class="cb" style="left:520px;top:7px"></div>
<div class="cb" style="left:594px;top:7px"></div>
<div class="cb" style="left:666px;top:7px"></div>
<div class="cb" style="left:746px;top:7px"></div>
<div class="cb" style="left:826px;top:7px"></div>
<div class="cb" style="left:898px;top:7px"></div><svg style="left:898px;top:5px" width="18" height="18" viewBox="0 0 18 18"><path d="M4.1 8.2L7.5 11.8L15.2 2.2" fill="none" stroke="#0b9a47" stroke-width="2.5" stroke-linecap="round" stroke-linejoin="round"/></svg>
<div class="cb" style="left:977px;top:7px"></div>
<div class="cb" style="left:1048px;top:7px"></div>
</div>
<div class="row" style="top:262px">
<div class="ln"></div>
<span class="t" style="left:0;width:58px;text-align:right">9</span>
<span class="t" style="left:75px;letter-spacing:-0.16px">Энергоцех</span>
<div class="cb" style="left:286px;top:7px"></div>
<div class="cb" style="left:360px;top:7px"></div>
<div class="cb" style="left:443px;top:7px"></div>
<div class="cb" style="left:520px;top:7px"></div>
<div class="cb" style="left:594px;top:7px"></div>
<div class="cb" style="left:666px;top:7px"></div>
<div class="cb" style="left:746px;top:7px"></div>
<div class="cb" style="left:826px;top:7px"></div>
<div class="cb" style="left:898px;top:7px"></div>
<div class="cb" style="left:977px;top:7px"></div><svg style="left:977px;top:5px" width="18" height="18" viewBox="0 0 18 18"><path d="M4.1 8.2L7.5 11.8L15.2 2.2" fill="none" stroke="#0b9a47" stroke-width="2.5" stroke-linecap="round" stroke-linejoin="round"/></svg>
<div class="cb" style="left:1048px;top:7px"></div>
</div>
<div class="row" style="top:291px">
<div class="ln"></div>
<span class="t" style="left:0;width:58px;text-align:right">10</span>
<span class="t" style="left:75px;letter-spacing:-0.23px">Штамповальный цех</span>
<div class="cb" style="left:286px;top:7px"></div>
<div class="cb" style="left:360px;top:7px"></div>
<div class="cb" style="left:443px;top:7px"></div>
<div class="cb" style="left:520px;top:7px"></div>
<div class="cb" style="left:594px;top:7px"></div>
<div class="cb" style="left:666px;top:7px"></div>
<div class="cb" style="left:746px;top:7px"></div>
<div class="cb" style="left:826px;top:7px"></div>
<div class="cb" style="left:898px;top:7px"></div>
<div class="cb" style="left:977px;top:7px"></div>
<div class="cb" style="left:1048px;top:7px"></div><svg style="left:1048px;top:5px" width="18" height="18" viewBox="0 0 18 18"><path d="M4.1 8.2L7.5 11.8L15.2 2.2" fill="none" stroke="#0b9a47" stroke-width="2.5" stroke-linecap="round" stroke-linejoin="round"/></svg>
</div>
<div style="left:276px;top:0;width:1px;height:308px;background:#c2c2c2"></div>
</div>
<svg style="left:1084px;top:8px" width="9" height="6" viewBox="0 0 9 6"><path d="M1 5L4.5 1L8 5Z" fill="#ccc"/></svg>
<div style="left:1084px;top:23px;width:8px;height:262px;background:#d6d6d6;border-radius:4px"></div>
<div style="left:1084px;top:23px;width:8px;height:231px;background:#8f8f8f;border-radius:4px"></div>
<svg style="left:1085px;top:294px" width="7" height="5" viewBox="0 0 7 5"><path d="M0 0H7L3.5 5Z" fill="#444"/></svg>
<svg style="left:9px;top:312px" width="5" height="7" viewBox="0 0 5 7"><path d="M5 0V7L0.5 3.5Z" fill="#ccc"/></svg>
<div style="left:23px;top:311px;width:1035px;height:8px;background:#d6d6d6;border-radius:4px"></div>
<div style="left:23px;top:311px;width:906px;height:8px;background:#999;border-radius:4px"></div>
<svg style="left:1069px;top:312px" width="5" height="7" viewBox="0 0 5 7"><path d="M0 0V7L4.5 3.5Z" fill="#444"/></svg>
</div>
<div class="inp" style="left:228px;top:691px;width:1119px"><span class="t" style="color:#a6a6a6">Комментарий</span><div class="vd" style="left:1097px"></div><svg style="left:1102.3px;top:13.6px" width="9" height="3" viewBox="0 0 9 3"><circle cx="1" cy="1.4" r="0.75" fill="#3a3a3a"/><circle cx="4.15" cy="1.4" r="0.75" fill="#3a3a3a"/><circle cx="7.3" cy="1.4" r="0.75" fill="#3a3a3a"/></svg></div>
</div>
</body></html>
